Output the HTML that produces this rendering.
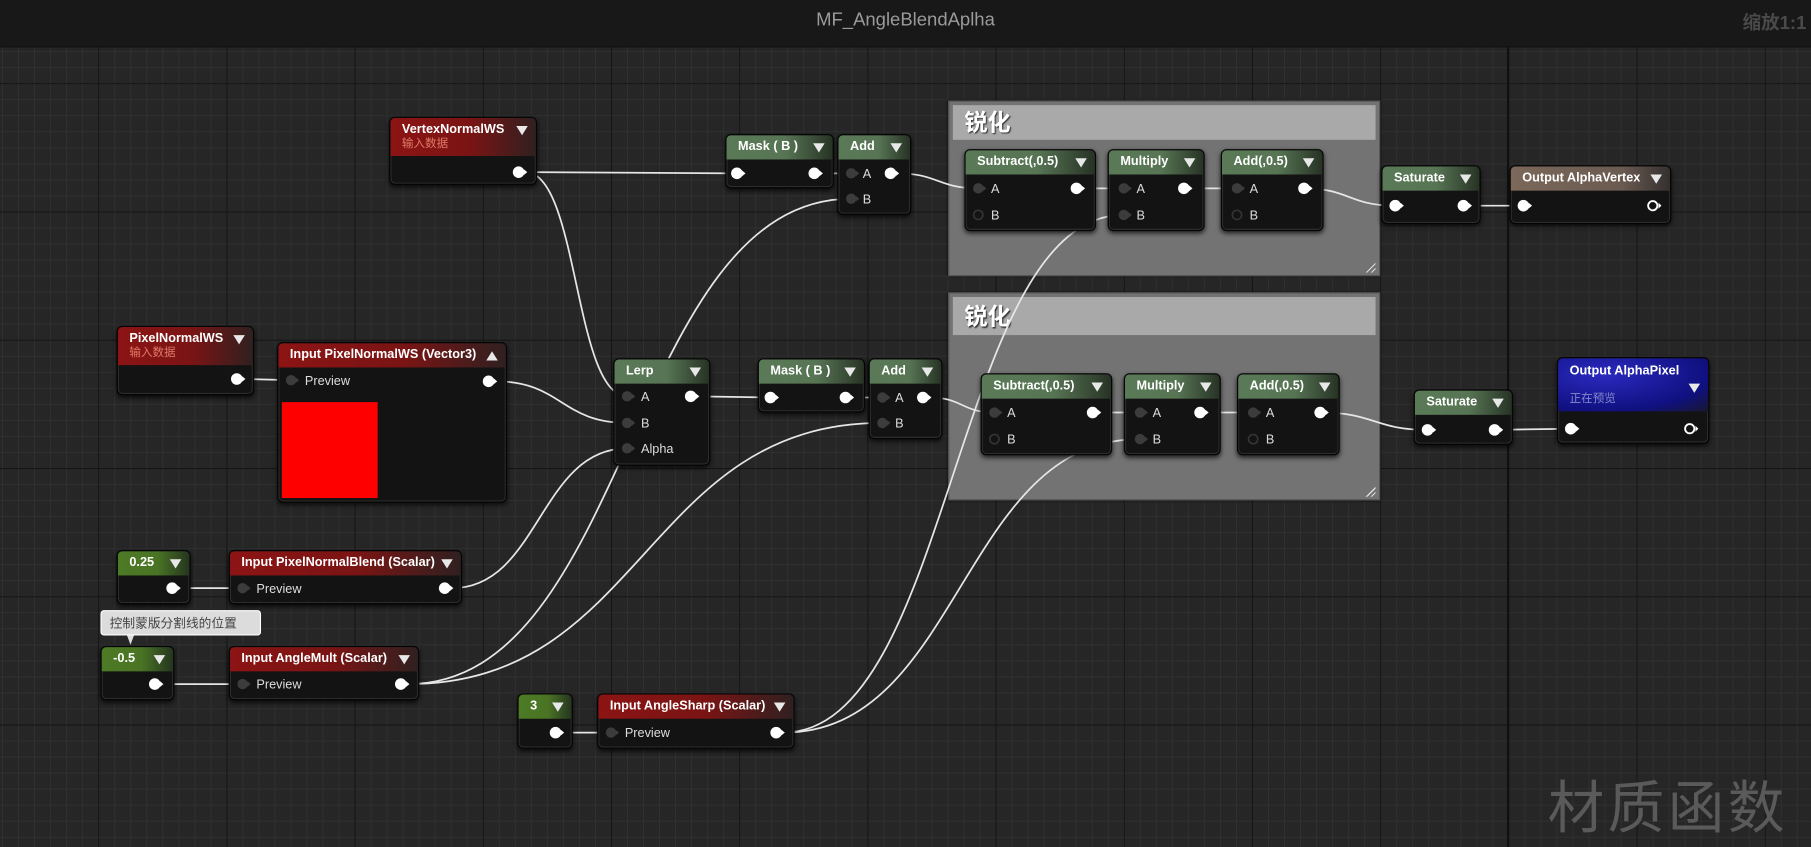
<!DOCTYPE html>
<html><head><meta charset="utf-8"><style>
html,body{margin:0;padding:0;width:1811px;height:847px;overflow:hidden;background:#262626}
#s{position:absolute;left:0;top:0;width:1568px;height:733px;transform-origin:0 0;transform:scale(1.15497,1.15553);overflow:hidden;
background-color:#262626;
background-image:linear-gradient(90deg,#141414 1px,transparent 1px),linear-gradient(#141414 1px,transparent 1px),linear-gradient(90deg,#303030 1px,transparent 1px),linear-gradient(#303030 1px,transparent 1px);
background-size:111px 111px,111px 111px,13.875px 13.875px,13.875px 13.875px;
background-position:85px 72px,85px 72px,85px 72px,85px 72px;
font-family:"Liberation Sans","Noto Sans CJK SC",sans-serif}
#tb{position:absolute;left:0;top:0;width:1568px;height:40px;background:#181818;border-bottom:1px solid #111}
#tb .t{position:absolute;left:0;width:1568px;top:9px;text-align:center;color:#9a9a9a;font-size:16px}
#tb .z{position:absolute;right:4px;top:6px;color:#4a4a4a;font-size:16px;font-weight:bold}
.vl{position:absolute;left:1305px;top:0;width:1px;height:733px;background:#0a0a0a}
.cm{position:absolute;background:#737373;border:1px solid #555;box-shadow:0 0 2px #000}
.cm .ch{position:absolute;left:3px;right:3px;top:3px;background:#a9a9a9;color:#fff;font-size:20px;font-weight:bold;padding-left:10px;text-shadow:1px 1px 1px #333}
.cm .g{position:absolute;right:3px;bottom:2px;width:10px;height:10px;background:repeating-linear-gradient(135deg,transparent 0 2px,#ddd 2px 3px);clip-path:polygon(100% 0,100% 100%,0 100%)}
.n{position:absolute;background:#121312;border:1px solid #050505;border-radius:5px;box-shadow:0 2px 4px rgba(0,0,0,.7),inset 0 0 0 1px #2c2c2c;overflow:hidden}
.h{position:relative;height:21px;color:#fff;font-size:11px;font-weight:bold;line-height:21px;padding-left:10px;white-space:nowrap}
.h:after{content:"";position:absolute;right:7px;top:7px;border-left:5px solid transparent;border-right:5px solid transparent;border-top:8px solid #e8e8e8}
.h.up:after{border-top:0;border-bottom:8px solid #e8e8e8}
.gr{background:linear-gradient(90deg,#5a7a57 0%,#577554 55%,#273325 100%)}
.rd{background:linear-gradient(90deg,#8c1414 0%,#7a1414 55%,#302020 100%)}
.cg{background:linear-gradient(90deg,#4d7a25 0%,#4a7424 55%,#253520 100%)}
.br{background:linear-gradient(90deg,#7b685a,#6a5a50 70%,#353030)}
.bl{background:radial-gradient(ellipse at 30% 30%,#2a2ac0,#101080 70%,#181830)}
.sub{display:block;font-size:10px;font-weight:normal;color:#e07a68;line-height:12px}
svg{position:absolute;left:0;top:0}
.tip{position:absolute;left:87px;top:528px;width:139px;height:22px;background:#dcdcdc;border:1px solid #fff;border-radius:3px;color:#444;font-size:11px;line-height:22px;padding-left:7px;box-sizing:border-box}
.wm{position:absolute;left:1340px;top:660px;font-size:49px;color:#5a5a5a;letter-spacing:3px}
</style></head><body><div id="s">
<div class="vl"></div>
<div id="tb"><div class="t">MF_AngleBlendAplha</div><div class="z">缩放1:1</div></div>
<div class="wm">材质函数</div>

<div class="cm" style="left:821px;top:87px;width:372px;height:150px"><div class="ch" style="height:30px;line-height:32px">锐化</div><div class="g"></div></div>
<div class="cm" style="left:821px;top:253px;width:372px;height:178px"><div class="ch" style="height:33px;line-height:36px">锐化</div><div class="g"></div></div>

<svg width="1568" height="733" fill="none" stroke="#e6e6e6" stroke-width="1.5">
<path d="M455 149 L638 150"/>
<path d="M455 149 C501 149 497 343 543 343"/>
<path d="M705 150 L737 150"/>
<path d="M777 150 C812 150 812 163 847 163"/>
<path d="M932 163 L973 163"/><path d="M1025 163 L1071 163"/>
<path d="M1129 163 C1168 163 1168 178 1208 178"/>
<path d="M1267 178 L1319 178"/>
<path d="M211 328 L252 329"/>
<path d="M429 330 C486 330 486 366 543 366"/>
<path d="M391 509 C467 509 467 388 543 388"/>
<path d="M604 343 L667 344"/><path d="M732 344 L764 344"/>
<path d="M805 344 C833 344 833 357 861 357"/>
<path d="M946 357 L987 357"/><path d="M1039 357 L1085 357"/>
<path d="M1143 357 C1190 357 1190 372 1236 372"/>
<path d="M1294 372 L1360 371"/>
<path d="M353 592 C545 592 545 172 737 172"/>
<path d="M353 592 C558 592 558 366 764 366"/>
<path d="M678 634 C825 634 826 186 973 186"/>
<path d="M678 634 C832 634 832 380 987 380"/>
<path d="M155 509 L210 509"/><path d="M140 592 L210 592"/><path d="M487 634 L529 634"/>
</svg>

<div class="n" style="left:337px;top:101px;width:126px;height:57px"><div class="h rd" style="height:33px;line-height:14px;padding-top:3px;box-sizing:border-box">VertexNormalWS<span class="sub">输入数据</span></div></div>
<div class="n" style="left:628px;top:116px;width:92px;height:45px"><div class="h gr">Mask ( B )</div></div>
<div class="n" style="left:725px;top:116px;width:62px;height:68px"><div class="h gr">Add</div></div>
<div class="n" style="left:835px;top:129px;width:112px;height:69px"><div class="h gr">Subtract(,0.5)</div></div>
<div class="n" style="left:959px;top:129px;width:82px;height:69px"><div class="h gr">Multiply</div></div>
<div class="n" style="left:1057px;top:129px;width:87px;height:69px"><div class="h gr">Add(,0.5)</div></div>
<div class="n" style="left:1196px;top:143px;width:84px;height:49px"><div class="h gr">Saturate</div></div>
<div class="n" style="left:1307px;top:143px;width:138px;height:49px"><div class="h br">Output AlphaVertex</div></div>

<div class="n" style="left:849px;top:323px;width:112px;height:69px"><div class="h gr">Subtract(,0.5)</div></div>
<div class="n" style="left:973px;top:323px;width:82px;height:69px"><div class="h gr">Multiply</div></div>
<div class="n" style="left:1071px;top:323px;width:87px;height:69px"><div class="h gr">Add(,0.5)</div></div>
<div class="n" style="left:1224px;top:337px;width:84px;height:46px"><div class="h gr">Saturate</div></div>
<div class="n" style="left:1348px;top:309px;width:130px;height:73px"><div class="h bl" style="height:46px;line-height:14px;padding-top:4px;box-sizing:border-box">Output AlphaPixel<span class="sub" style="color:#8888cc;margin-top:12px">正在预览</span></div></div>
<style>.n .bl:after{top:22px}</style>

<div class="n" style="left:101px;top:282px;width:117px;height:58px"><div class="h rd" style="height:33px;line-height:14px;padding-top:3px;box-sizing:border-box">PixelNormalWS<span class="sub">输入数据</span></div></div>
<div class="n" style="left:240px;top:296px;width:197px;height:137px"><div class="h rd up">Input PixelNormalWS (Vector3)</div><div style="position:absolute;left:3px;top:51px;width:83px;height:83px;background:#f00"></div></div>
<div class="n" style="left:531px;top:310px;width:82px;height:91px"><div class="h gr">Lerp</div></div>
<div class="n" style="left:656px;top:310px;width:91px;height:45px"><div class="h gr">Mask ( B )</div></div>
<div class="n" style="left:752px;top:310px;width:62px;height:68px"><div class="h gr">Add</div></div>

<div class="n" style="left:101px;top:476px;width:62px;height:45px"><div class="h cg">0.25</div></div>
<div class="n" style="left:198px;top:476px;width:200px;height:45px"><div class="h rd">Input PixelNormalBlend (Scalar)</div></div>
<div class="tip">控制蒙版分割线的位置</div>
<div class="n" style="left:87px;top:559px;width:62px;height:45px"><div class="h cg">-0.5</div></div>
<div class="n" style="left:198px;top:559px;width:163px;height:45px"><div class="h rd">Input AngleMult (Scalar)</div></div>
<div class="n" style="left:448px;top:600px;width:46px;height:46px"><div class="h cg">3</div></div>
<div class="n" style="left:517px;top:600px;width:169px;height:46px"><div class="h rd">Input AngleSharp (Scalar)</div></div>

<svg width="1568" height="733" font-family="Liberation Sans, sans-serif" font-size="11">
<defs>
<g id="w"><circle r="5" fill="#fff"/><path d="M4.5 -2.5 L7.5 0 L4.5 2.5Z" fill="#fff"/></g>
<g id="d"><circle r="4.5" fill="#3c3c3c"/><path d="M4 -2.5 L7 0 L4 2.5Z" fill="#3c3c3c"/></g>
<g id="o"><circle r="4" fill="none" stroke="#333" stroke-width="1.5"/></g>
<g id="h"><circle r="4" fill="none" stroke="#fff" stroke-width="1.6"/><path d="M5 -2.5 L7.5 0 L5 2.5Z" fill="#fff"/></g>
</defs>
<g fill="#ddd">
<use href="#w" x="449" y="149"/>
<use href="#w" x="638" y="150"/><use href="#w" x="705" y="150"/>
<use href="#d" x="737" y="150"/><text x="747" y="154">A</text><use href="#w" x="771" y="150"/>
<use href="#d" x="737" y="172"/><text x="747" y="176">B</text>
<use href="#d" x="847" y="163"/><text x="858" y="167">A</text><use href="#w" x="932" y="163"/>
<use href="#o" x="847" y="186"/><text x="858" y="190">B</text>
<use href="#d" x="973" y="163"/><text x="984" y="167">A</text><use href="#w" x="1025" y="163"/>
<use href="#d" x="973" y="186"/><text x="984" y="190">B</text>
<use href="#d" x="1071" y="163"/><text x="1082" y="167">A</text><use href="#w" x="1129" y="163"/>
<use href="#o" x="1071" y="186"/><text x="1082" y="190">B</text>
<use href="#w" x="1208" y="178"/><use href="#w" x="1267" y="178"/>
<use href="#w" x="1319" y="178"/><use href="#h" x="1431" y="178"/>

<use href="#d" x="861" y="357"/><text x="872" y="361">A</text><use href="#w" x="946" y="357"/>
<use href="#o" x="861" y="380"/><text x="872" y="384">B</text>
<use href="#d" x="987" y="357"/><text x="998" y="361">A</text><use href="#w" x="1039" y="357"/>
<use href="#d" x="987" y="380"/><text x="998" y="384">B</text>
<use href="#d" x="1085" y="357"/><text x="1096" y="361">A</text><use href="#w" x="1143" y="357"/>
<use href="#o" x="1085" y="380"/><text x="1096" y="384">B</text>
<use href="#w" x="1236" y="372"/><use href="#w" x="1294" y="372"/>
<use href="#w" x="1360" y="371"/><use href="#h" x="1463" y="371"/>

<use href="#w" x="205" y="328"/>
<use href="#d" x="252" y="329"/><text x="264" y="333">Preview</text><use href="#w" x="423" y="330"/>
<use href="#d" x="543" y="343"/><text x="555" y="347">A</text><use href="#w" x="598" y="343"/>
<use href="#d" x="543" y="366"/><text x="555" y="370">B</text>
<use href="#d" x="543" y="388"/><text x="555" y="392">Alpha</text>
<use href="#w" x="667" y="344"/><use href="#w" x="732" y="344"/>
<use href="#d" x="764" y="344"/><text x="775" y="348">A</text><use href="#w" x="799" y="344"/>
<use href="#d" x="764" y="366"/><text x="775" y="370">B</text>

<use href="#w" x="149" y="509"/>
<use href="#d" x="210" y="509"/><text x="222" y="513">Preview</text><use href="#w" x="385" y="509"/>
<use href="#w" x="134" y="592"/>
<use href="#d" x="210" y="592"/><text x="222" y="596">Preview</text><use href="#w" x="347" y="592"/>
<use href="#w" x="481" y="634"/>
<use href="#d" x="529" y="634"/><text x="541" y="638">Preview</text><use href="#w" x="672" y="634"/>
</g>
<path d="M110 550 L113 558 L116 550Z" fill="#dcdcdc"/>
</svg>
</div></body></html>
